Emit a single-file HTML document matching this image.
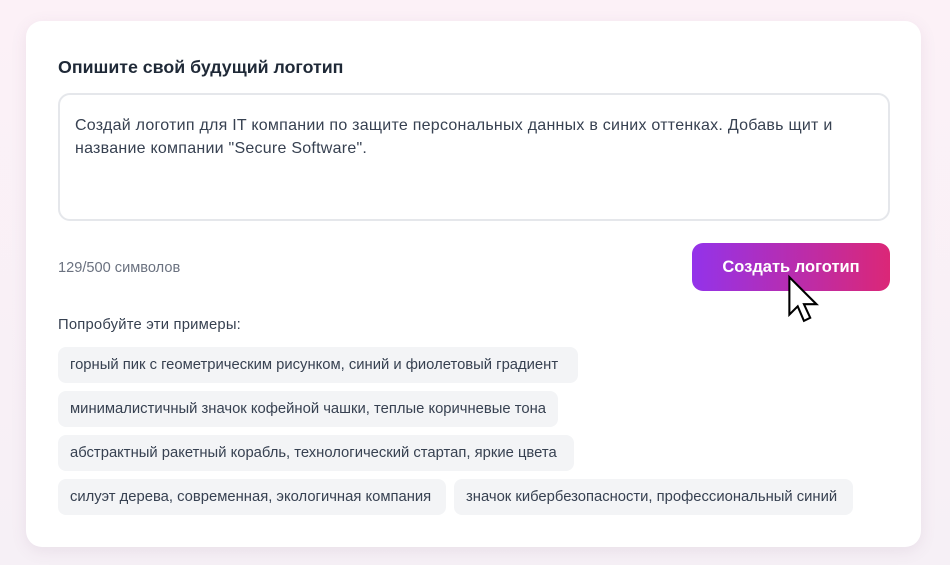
<!DOCTYPE html>
<html><head><meta charset="utf-8"><style>
*{box-sizing:border-box;margin:0;padding:0}
body{width:950px;height:565px;overflow:hidden;background:linear-gradient(180deg,#fcf1f7,#f6f0f6);font-family:"Liberation Sans",sans-serif;position:relative}
.card{position:absolute;left:26px;top:21px;width:895px;height:526px;background:#fff;border-radius:16px;box-shadow:0 4px 16px rgba(120,80,120,.10)}
.t{position:absolute;left:58px;top:57px;font-size:17.8px;font-weight:bold;color:#1f2937;white-space:nowrap}
.ta{position:absolute;left:58px;top:93px;width:832px;height:128px;border:2px solid #e5e7eb;border-radius:12px;padding:19px 15px;font-size:16px;letter-spacing:0.25px;line-height:23px;color:#374151}
.cnt{position:absolute;left:58px;top:260px;font-size:14.6px;color:#6b7280}
.btn{position:absolute;left:692px;top:243px;width:198px;height:48px;border-radius:11px;background:linear-gradient(90deg,#9333ea,#db2777);color:#fff;font-weight:bold;font-size:16.5px;text-align:center;line-height:48px}
.lab{position:absolute;left:58px;top:317px;font-size:14.8px;letter-spacing:0.2px;color:#374151}
.c{position:absolute;height:36px;background:#f3f4f6;border-radius:8px;font-size:14.8px;color:#374151;line-height:36px;padding-left:12px;white-space:nowrap;overflow:hidden}
</style></head><body>
<div class="card"></div>
<div class="t">Опишите свой будущий логотип</div>
<div class="ta">Создай логотип для IT компании по защите персональных данных в синих оттенках. Добавь щит и название компании "Secure Software".</div>
<div class="cnt">129/500 символов</div>
<div class="btn">Создать логотип</div>
<svg style="position:absolute;left:785px;top:274px" width="40" height="50" viewBox="0 0 36 48"><path d="M3 3 L3 39 L11 31 L17 45 L23 42 L17 29 L29 29 Z" fill="#fff" stroke="#000" stroke-width="2" stroke-linejoin="miter"/></svg>
<div class="lab">Попробуйте эти примеры:</div>
<div class="c" style="left:58px;top:347px;width:520px">горный пик с геометрическим рисунком, синий и фиолетовый градиент</div>
<div class="c" style="left:58px;top:391px;width:500px">минималистичный значок кофейной чашки, теплые коричневые тона</div>
<div class="c" style="left:58px;top:435px;width:516px">абстрактный ракетный корабль, технологический стартап, яркие цвета</div>
<div class="c" style="left:58px;top:479px;width:388px">силуэт дерева, современная, экологичная компания</div>
<div class="c" style="left:454px;top:479px;width:399px">значок кибербезопасности, профессиональный синий</div>
</body></html>
